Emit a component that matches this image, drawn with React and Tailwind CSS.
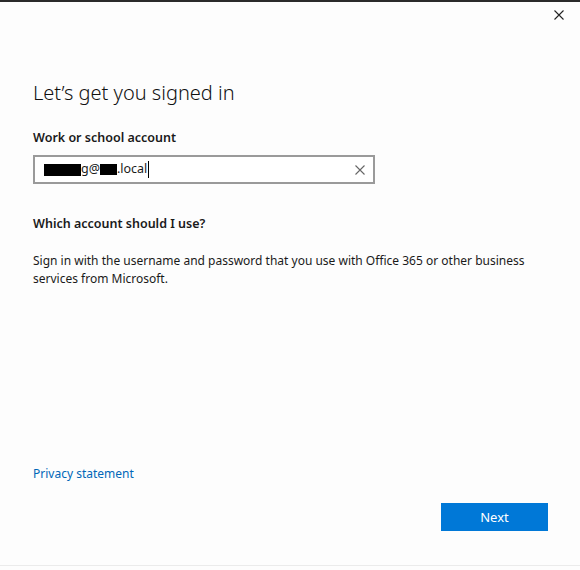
import React from 'react';

function CloseIcon({ className }) {
  return (
    <svg viewBox="0 0 10 10" className={className} fill="none" stroke="currentColor" strokeWidth="1.1">
      <path d="M0.5 0.5L9.5 9.5M9.5 0.5L0.5 9.5" />
    </svg>
  );
}

export default function App() {
  return (
    <div
      className="w-[580px] h-[570px] bg-[#fdfdfd] flex flex-col text-[#1a1a1a] border-t-2 border-[#2b2b2b]"
      style={{ fontFamily: '"Noto Sans", "Open Sans", sans-serif' }}
    >
      {/* title bar */}
      <div className="h-[28px] flex justify-end items-start pr-[16px] pt-[8px]">
        <CloseIcon className="w-[10px] h-[10px] text-[#222]" />
      </div>

      <div className="flex-1 flex flex-col px-[33px]">
        <h1 className="mt-[50px] text-[20px] font-light leading-[26px] text-[#111]">
          Let’s get you signed in
        </h1>

        <label className="mt-[23px] text-[12.5px] font-semibold leading-[18px]">
          Work or school account
        </label>

        {/* account input */}
        <div className="mt-[8px] w-[342px] h-[29px] border-2 border-[#9a9a9a] bg-white flex items-center pl-[9px] pr-[8px]">
          <div className="flex-1 flex items-center text-[12.5px] leading-none">
            <span className="inline-block w-[37px] h-[12px] bg-black" />
            <span>g@</span>
            <span className="inline-block w-[17px] h-[11px] bg-black" />
            <span>.local</span>
            <span className="inline-block w-px h-[17px] bg-black ml-[1px]" />
          </div>
          <CloseIcon className="w-[10px] h-[10px] text-[#666]" />
        </div>

        <h2 className="mt-[31px] text-[12.5px] font-semibold leading-[18px]">
          Which account should I use?
        </h2>

        <p className="mt-[19px] text-[12px] leading-[18px] text-[#1a1a1a] w-[515px]">
          Sign in with the username and password that you use with Office 365 or other business services from Microsoft.
        </p>

        <div className="flex-1" />

        <a className="text-[12px] leading-[18px] text-[#0067b8] w-fit">Privacy statement</a>

        <div className="mt-[20px] flex justify-end">
          <button className="w-[107px] h-[28px] bg-[#0078d7] text-white text-[13px] leading-none mr-[-1px]">
            Next
          </button>
        </div>

        <div className="h-[34px]" />
      </div>
      <div className="h-px bg-[#ebebeb]" />
      <div className="h-[4px]" />
    </div>
  );
}
